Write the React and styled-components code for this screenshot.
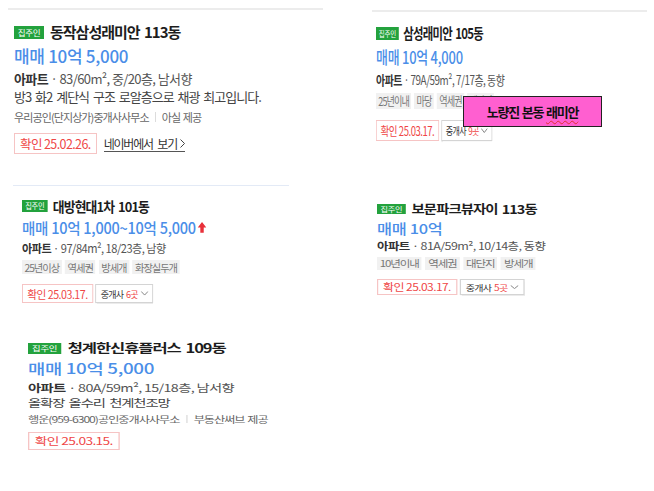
import React from 'react';
import styled, { createGlobalStyle } from 'styled-components';

const GlobalStyle = createGlobalStyle`
  html, body { margin: 0; padding: 0; background: #fff; }
  body { font-family: "Noto Sans CJK KR", "Noto Sans", sans-serif; }
`;

const Page = styled.div`
  display: flex;
  width: 654px;
  height: 491px;
  overflow: hidden;
  background: #fff;
`;

const LeftCol = styled.div`
  width: 340px;
  display: flex;
  flex-direction: column;
  align-items: flex-start;
`;

const RightCol = styled.div`
  flex: 1;
  position: relative;
  display: flex;
  flex-direction: column;
  align-items: flex-start;
`;

const Slot = styled.section`
  box-sizing: border-box;
  width: ${p => (p.$w ? `${p.$w}px` : 'auto')};
  margin: ${p => p.$mt}px 0 0 ${p => p.$ml}px;
  padding: ${p => p.$pt || 0}px 0 0 ${p => p.$pl || 0}px;
  border-top: ${p => (p.$line ? `${p.$lw || 1}px solid ${p.$line}` : 'none')};
`;

const Inner = styled.div`
  zoom: ${p => p.$zoom};
  transform: scaleX(${p => p.$sx});
  transform-origin: left top;
  width: max-content;
`;

const TitleRow = styled.div`
  display: flex;
  align-items: center;
  gap: 6px;
  height: 20px;
`;

const Badge = styled.span`
  display: inline-flex;
  align-items: center;
  justify-content: center;
  width: 30px;
  height: 13px;
  background: #23a23d;
  color: #fff;
  font-size: 8.5px;
  letter-spacing: -0.3px;
  line-height: 1;
`;

const Title = styled.h3`
  margin: 0;
  font-size: 15px;
  font-weight: 700;
  color: #1d1d1d;
  letter-spacing: -1px;
  word-spacing: 2px;
  line-height: 20px;
  white-space: nowrap;
`;

const Price = styled.div`
  display: flex;
  align-items: center;
  gap: 2px;
  height: 28px;
  font-size: 17px;
  font-weight: 500;
  color: #4a8ee8;
  letter-spacing: -0.3px;
  line-height: 28px;
  white-space: nowrap;
`;

const Info = styled.div`
  font-size: 13px;
  color: #555;
  letter-spacing: -0.6px;
  line-height: 18px;
  white-space: nowrap;
  b { font-weight: 700; color: #333; }
`;

const Desc = styled.div`
  font-size: 13px;
  color: #444;
  letter-spacing: -1px;
  word-spacing: 2px;
  line-height: 17px;
  white-space: nowrap;
`;

const Agency = styled.div`
  display: flex;
  align-items: center;
  margin-top: 2px;
  height: 20px;
  font-size: 11px;
  color: #666;
  letter-spacing: -0.9px;
  word-spacing: 1px;
  white-space: nowrap;
`;

const Sep = styled.span`
  width: 1px;
  height: 10px;
  background: #dcdcdc;
  margin: 0 6px;
`;

const Tags = styled.div`
  display: flex;
  gap: 4px;
  margin-top: 4px;
  height: 16px;
`;

const Tag = styled.span`
  background: #f1f1f1;
  color: #777;
  font-size: 12px;
  letter-spacing: -1.2px;
  line-height: 16px;
  padding: 0 3px;
  white-space: nowrap;
`;

const Actions = styled.div`
  display: flex;
  align-items: center;
  gap: ${p => p.$gap}px;
  margin-top: ${p => p.$mt}px;
  height: 21px;
`;

const Confirm = styled.span`
  box-sizing: border-box;
  display: inline-flex;
  align-items: center;
  height: 21px;
  padding: 0 5px;
  border: 1px solid #f6c4c4;
  color: #ef4646;
  font-size: 12.5px;
  letter-spacing: -0.6px;
  white-space: nowrap;
`;

const NaverLink = styled.a`
  display: inline-flex;
  align-items: center;
  gap: 3px;
  height: 16px;
  border-bottom: 1px solid #555;
  color: #333;
  font-size: 12px;
  letter-spacing: -1.2px;
  word-spacing: 3px;
  text-decoration: none;
  white-space: nowrap;
`;

const Broker = styled.button`
  box-sizing: border-box;
  display: inline-flex;
  align-items: center;
  gap: 3px;
  height: 21px;
  padding: 0 5px;
  border: 1px solid #d4d4d4;
  box-shadow: 0 1px 1px rgba(0, 0, 0, 0.08);
  background: #fff;
  color: #333;
  font-family: inherit;
  font-size: 10.5px;
  letter-spacing: -0.8px;
  white-space: nowrap;
  em { font-style: normal; color: #ef4646; }
`;

const Note = styled.div`
  position: absolute;
  left: 123px;
  top: 96px;
  width: 139px;
  height: 31px;
  box-sizing: border-box;
  border: 1px solid #222;
  background: #ff5fd0;
  display: flex;
  align-items: center;
  justify-content: center;
  font-size: 13px;
  font-weight: 700;
  color: #111;
  letter-spacing: -1.2px;
  word-spacing: 1px;
`;

const Squiggle = styled.span`
  text-decoration: underline wavy #e0302f;
  text-decoration-thickness: 1px;
  text-underline-offset: 3px;
`;

const UpArrow = () => (
  <svg width="10" height="12" viewBox="0 0 10 12">
    <polygon points="5,0 10,6 7,6 7,12 3,12 3,6 0,6" fill="#e8303a" />
  </svg>
);

const ChevronRight = () => (
  <svg width="5" height="9" viewBox="0 0 5 9">
    <path d="M0.5 0.5 L4.5 4.5 L0.5 8.5" fill="none" stroke="#444" strokeWidth="1" />
  </svg>
);

const ChevronDown = () => (
  <svg width="9" height="5" viewBox="0 0 9 5">
    <path d="M0.5 0.5 L4.5 4.5 L8.5 0.5" fill="none" stroke="#777" strokeWidth="1" />
  </svg>
);

const Listing = ({ item }) => (
  <Inner $zoom={item.zoom} $sx={item.sx}>
    <TitleRow>
      <Badge>집주인</Badge>
      <Title>{item.title}</Title>
    </TitleRow>
    <Price>
      {item.price}
      {item.up && <UpArrow />}
    </Price>
    <Info>
      <b>아파트</b> · {item.spec}
    </Info>
    {item.desc && <Desc>{item.desc}</Desc>}
    {item.agency && (
      <Agency>
        {item.agency[0]}
        <Sep />
        {item.agency[1]}
      </Agency>
    )}
    {item.tags && (
      <Tags>
        {item.tags.map(t => (
          <Tag key={t}>{t}</Tag>
        ))}
      </Tags>
    )}
    <Actions $mt={item.tags ? 11 : 6} $gap={item.naver ? 7 : 3}>
      <Confirm>확인 {item.date}</Confirm>
      {item.naver && (
        <NaverLink>
          네이버에서 보기 <ChevronRight />
        </NaverLink>
      )}
      {item.brokers && (
        <Broker>
          중개사 <em>{item.brokers}곳</em>
          <ChevronDown />
        </Broker>
      )}
    </Actions>
  </Inner>
);

const left = [
  {
    slot: { $mt: 8, $ml: 8, $w: 315, $line: '#ececec', $lw: 2, $pt: 12, $pl: 6 },
    zoom: 1,
    sx: 1,
    title: '동작삼성래미안 113동',
    price: '매매 10억 5,000',
    spec: '83/60m², 중/20층, 남서향',
    desc: '방3 화2 계단식 구조 로알층으로 채광 최고입니다.',
    agency: ['우리공인(단지상가)중개사사무소', '아실 제공'],
    date: '25.02.26.',
    naver: true,
  },
  {
    slot: { $mt: 31, $ml: 13, $w: 276, $line: '#e3eaf6', $lw: 1, $pt: 11, $pl: 9 },
    zoom: 0.9,
    sx: 0.95,
    title: '대방현대1차 101동',
    price: '매매 10억 1,000~10억 5,000',
    up: true,
    spec: '97/84m², 18/23층, 남향',
    tags: ['25년이상', '역세권', '방세개', '화장실두개'],
    date: '25.03.17.',
    brokers: 6,
  },
  {
    slot: { $mt: 37, $ml: 28 },
    zoom: 0.83,
    sx: 1.33,
    title: '청계한신휴플러스 109동',
    price: '매매 10억 5,000',
    spec: '80A/59m², 15/18층, 남서향',
    desc: '올확장 올수리 천계천조망',
    agency: ['행운(959-6300)공인중개사사무소', '부동산써브 제공'],
    date: '25.03.15.',
  },
];

const right = [
  {
    slot: { $mt: 10, $ml: 32, $w: 275, $line: '#ececec', $lw: 2, $pt: 11, $pl: 4 },
    zoom: 1,
    sx: 0.76,
    title: '삼성래미안 105동',
    price: '매매 10억 4,000',
    spec: '79A/59m², 7/17층, 동향',
    tags: ['25년이내', '마당', '역세권', '대단지'],
    date: '25.03.17.',
    brokers: 9,
  },
  {
    slot: { $mt: 60, $ml: 37 },
    zoom: 0.8,
    sx: 1.2,
    title: '보문파크뷰자이 113동',
    price: '매매 10억',
    spec: '81A/59m², 10/14층, 동향',
    tags: ['10년이내', '역세권', '대단지', '방세개'],
    date: '25.03.17.',
    brokers: 5,
  },
];

export default function App() {
  return (
    <>
      <GlobalStyle />
      <Page>
        <LeftCol>
          {left.map(item => (
            <Slot key={item.title} {...item.slot}>
              <Listing item={item} />
            </Slot>
          ))}
        </LeftCol>
        <RightCol>
          {right.map(item => (
            <Slot key={item.title} {...item.slot}>
              <Listing item={item} />
            </Slot>
          ))}
          <Note>
            <span>
              노량진 본동 <Squiggle>래미안</Squiggle>
            </span>
          </Note>
        </RightCol>
      </Page>
    </>
  );
}
